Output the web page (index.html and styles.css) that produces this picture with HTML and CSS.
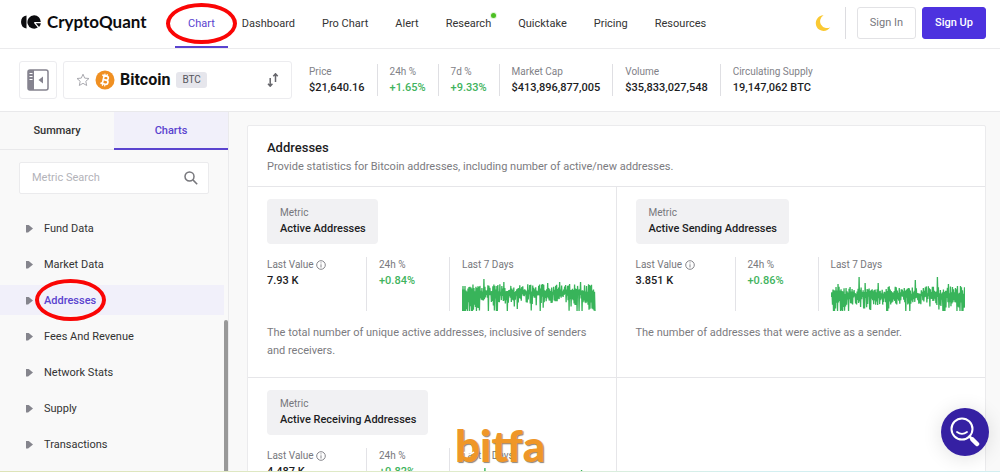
FILE: index.html
```html
<!DOCTYPE html>
<html lang="en">
<head>
<meta charset="utf-8">
<meta name="viewport" content="width=device-width, initial-scale=1">
<title>CryptoQuant - Bitcoin Addresses</title>
<link rel="stylesheet" href="styles.css">
</head>
<body>
<header class="topbar">
  <a class="brand" href="#">
    <svg class="brand-mark" viewBox="0 0 21 14" aria-hidden="true">
      <path d="M6.500 .5v13A6.600 6.600 0 0 1 6.500 .5z"/>
      <path d="M14.200 .3a6.700 6.700 0 1 0 3.600 12.300L14.200 8.200V7h6.600A6.700 6.700 0 0 0 14.200 .3z"/>
      <path d="M15.800 8.300h5a6 6 0 0 1-1.700 3.700z"/>
    </svg>
    <span class="brand-name">CryptoQuant</span>
  </a>
  <nav class="nav">
    <a class="nav-link active" href="#">Chart<span class="ring ring-nav"></span></a>
    <a class="nav-link" href="#">Dashboard</a>
    <a class="nav-link" href="#">Pro Chart</a>
    <a class="nav-link" href="#">Alert</a>
    <a class="nav-link" href="#">Research<span class="dot"></span></a>
    <a class="nav-link" href="#">Quicktake</a>
    <a class="nav-link" href="#">Pricing</a>
    <a class="nav-link" href="#">Resources</a>
  </nav>
  <div class="account">
    <button class="theme" type="button" aria-label="Dark mode">
      <svg viewBox="0 0 16 16"><path d="M8.600 .3A7.800 7.800 0 1 0 15.200 12.200 6.700 6.700 0 0 1 8.600 .3z"/></svg>
    </button>
    <div class="account-actions">
      <button class="btn" type="button">Sign In</button>
      <button class="btn btn-primary" type="button">Sign Up</button>
    </div>
  </div>
</header>

<section class="assetbar">
  <button class="panel-toggle" type="button" aria-label="Collapse sidebar">
    <svg viewBox="0 0 22 22">
      <rect x="1" y="1" width="20" height="20" rx="2" fill="#fff" stroke="#85838f" stroke-width="1.500"/>
      <path d="M2 1h5v20H2a1 1 0 0 1-1-1V2a1 1 0 0 1 1-1z" fill="#85838f"/>
      <path d="M2.500 4.500h3M2.500 7.500h3M2.500 10.500h3" stroke="#fff"/>
      <path d="M16 7.500v7L11.500 11z" fill="#85838f"/>
    </svg>
  </button>
  <button class="asset" type="button">
    <svg class="star" viewBox="0 0 14 14"><path d="M7 1.200l1.700 3.900 4.300.4-3.200 2.800.9 4.200L7 10.300l-3.700 2.200.9-4.200L1 5.500l4.300-.4z"/></svg>
    <svg class="coin" viewBox="0 0 20 20">
      <circle cx="10" cy="10" r="9.500" fill="#f09022"/>
      <g transform="rotate(13 10 10)" fill="none" stroke="#fff" stroke-width="1.700">
        <path d="M6.300 5.900h4.500a2 2 0 0 1 0 4H8.200M8.200 9.900h3.100a2.100 2.100 0 0 1 0 4.200h-5M8.200 5.900v8.200"/>
        <path d="M8.700 3.800v2M11 3.800v2M8.700 14.200v2M11 14.200v2" stroke-width="1.200"/>
      </g>
    </svg>
    <span class="asset-name">Bitcoin</span>
    <span class="ticker">BTC</span>
    <svg class="swap" viewBox="0 0 12 14"><path d="M3.200 5v8M1 10.800l2.200 2.400 2.200-2.400M8.500 9V1M6.300 3.200L8.500 .8l2.200 2.400"/></svg>
  </button>
  <dl class="quotes">
    <div class="quote"><dt>Price</dt><dd>$21,640.16</dd></div>
    <div class="quote"><dt>24h %</dt><dd class="up">+1.65%</dd></div>
    <div class="quote"><dt>7d %</dt><dd class="up">+9.33%</dd></div>
    <div class="quote"><dt>Market Cap</dt><dd>$413,896,877,005</dd></div>
    <div class="quote"><dt>Volume</dt><dd>$35,833,027,548</dd></div>
    <div class="quote"><dt>Circulating Supply</dt><dd>19,147,062 BTC</dd></div>
  </dl>
</section>

<div class="workspace">
  <aside class="sidebar">
    <div class="tabs">
      <button class="tab" type="button">Summary</button>
      <button class="tab selected" type="button">Charts</button>
    </div>
    <label class="search">
      <input type="text" placeholder="Metric Search" aria-label="Metric Search">
      <svg viewBox="0 0 14 14"><circle cx="5.500" cy="5.500" r="4.500"/><path d="M8.900 8.900l4.300 4.300"/></svg>
    </label>
    <nav class="tree">
      <a class="tree-item" href="#">Fund Data</a>
      <a class="tree-item" href="#">Market Data</a>
      <a class="tree-item current" href="#">Addresses<span class="ring ring-tree"></span></a>
      <a class="tree-item" href="#">Fees And Revenue</a>
      <a class="tree-item" href="#">Network Stats</a>
      <a class="tree-item" href="#">Supply</a>
      <a class="tree-item" href="#">Transactions</a>
    </nav>
    <span class="thumb"></span>
  </aside>

  <main class="content">
    <section class="card">
      <div class="card-head">
        <h1>Addresses</h1>
        <p>Provide statistics for Bitcoin addresses, including number of active/new addresses.</p>
      </div>
      <div class="metrics">
        <article class="metric">
          <a class="badge" href="#"><small>Metric</small><b>Active Addresses</b></a>
          <div class="stats">
            <div class="stat"><span class="label">Last Value <svg class="info" viewBox="0 0 10 10"><circle cx="5" cy="5" r="4.300"/><path d="M5 4.300v3.200M5 2.400v1"/></svg></span><strong>7.93 K</strong></div>
            <div class="stat"><span class="label">24h %</span><strong class="up">+0.84%</strong></div>
            <div class="stat"><span class="label">Last 7 Days</span><svg class="spark" data-series="active" viewBox="0 0 134 34" preserveAspectRatio="none"></svg></div>
          </div>
          <p class="about">The total number of unique active addresses, inclusive of senders and receivers.</p>
        </article>
        <article class="metric">
          <a class="badge" href="#"><small>Metric</small><b>Active Sending Addresses</b></a>
          <div class="stats">
            <div class="stat"><span class="label">Last Value <svg class="info" viewBox="0 0 10 10"><circle cx="5" cy="5" r="4.300"/><path d="M5 4.300v3.200M5 2.400v1"/></svg></span><strong>3.851 K</strong></div>
            <div class="stat"><span class="label">24h %</span><strong class="up">+0.86%</strong></div>
            <div class="stat"><span class="label">Last 7 Days</span><svg class="spark" data-series="sending" viewBox="0 0 134 34" preserveAspectRatio="none"></svg></div>
          </div>
          <p class="about">The number of addresses that were active as a sender.</p>
        </article>
        <article class="metric">
          <a class="badge" href="#"><small>Metric</small><b>Active Receiving Addresses</b></a>
          <div class="stats">
            <div class="stat"><span class="label">Last Value <svg class="info" viewBox="0 0 10 10"><circle cx="5" cy="5" r="4.300"/><path d="M5 4.300v3.200M5 2.400v1"/></svg></span><strong>4.487 K</strong></div>
            <div class="stat"><span class="label">24h %</span><strong class="up">+0.82%</strong></div>
            <div class="stat"><span class="label">Last 7 Days</span><svg class="spark" data-series="receiving" viewBox="0 0 134 34" preserveAspectRatio="none"></svg></div>
          </div>
        </article>
        <article class="metric"></article>
      </div>
    </section>
  </main>
</div>

<div class="watermark">bitfa<svg viewBox="0 0 12 5"><path d="M1 1q5 4.500 10 0"/></svg></div>
<button class="help" type="button" aria-label="Search help">
  <svg viewBox="0 0 30 30"><circle cx="12" cy="12" r="10.500" stroke-width="2"/><path d="M7 15q5 3.600 10 0" stroke-width="1.800"/><path d="M19.500 19.500l3 3" stroke-width="2.500"/><path d="M22.500 22.500l4.500 4.500" stroke-width="4.500"/></svg>
</button>
<div class="baseline"></div>
<script src="sparks.js"></script>
</body>
</html>
```

FILE: styles.css
```css
* { box-sizing: border-box; }
body {
  margin: 0;
  height: 100vh;
  display: flex;
  flex-direction: column;
  overflow: hidden;
  position: relative;
  background: #fff;
  color: #333;
  font: 11px/16px Roboto, "Liberation Sans", sans-serif;
}
a { color: inherit; text-decoration: none; }
button { font: inherit; color: inherit; background: none; border: 0; padding: 0; }
h1, p, dl, dd { margin: 0; }

.topbar {
  flex: none;
  display: flex;
  height: 49px;
  padding: 0 14px 0 20px;
  border-bottom: 1px solid #ebebed;
}
.brand { display: flex; align-items: center; gap: 6px; width: 155px; height: 44px; }
.brand-mark { width: 21px; height: 14px; fill: #0c0c0f; }
.brand-name { font: 700 17px/24px Lato, sans-serif; color: #0c0c0f; }
.nav { display: flex; gap: 1px; }
.nav-link { position: relative; padding: 0 13px; line-height: 47px; white-space: nowrap; }
.nav-link.active { color: #5a43cf; border-bottom: 2px solid #5a43cf; }
.dot {
  position: absolute; top: 13px; right: 8px;
  width: 5px; height: 5px; border-radius: 50%;
  background: #4cbf22; box-shadow: 0 0 0 1px #e0f5d8;
}
.ring { position: absolute; border: 4px solid #fa0505; border-radius: 50%; z-index: 2; pointer-events: none; }
.ring-nav { inset: 3px -9px 2px -9px; }
.account { display: flex; align-items: center; gap: 14px; margin-left: auto; height: 46px; }
.theme { width: 16px; height: 16px; }
.theme svg { display: block; fill: #fac933; }
.account-actions { display: flex; gap: 6px; padding-left: 11px; border-left: 1px solid #dcdce0; }
.btn { height: 32px; padding: 0 12px; border: 1px solid #e2e2e5; border-radius: 3px; color: #77777d; }
.btn-primary { background: #4d32df; border-color: #4d32df; color: #fff; font-weight: 500; }

.assetbar {
  flex: none;
  display: flex;
  align-items: center;
  height: 63px;
  padding: 0 14px 0 19px;
  border-bottom: 1px solid #e9e9eb;
}
.panel-toggle, .asset { height: 38px; border: 1px solid #ececef; border-radius: 3px; }
.panel-toggle { display: grid; place-items: center; width: 38px; margin-right: 6px; }
.panel-toggle svg { width: 22px; height: 22px; }
.asset { display: flex; align-items: center; width: 229px; padding: 0 12px; margin-right: 17px; }
.star { width: 14px; height: 14px; margin-right: 5px; fill: none; stroke: #aaaab0; }
.coin { width: 20px; height: 20px; margin-right: 5px; }
.asset-name { font-size: 16px; font-weight: 700; color: #111; }
.ticker { margin-left: 6px; padding: 0 6px; border-radius: 3px; background: #e6e6ec; color: #55555c; font-size: 10px; }
.swap { width: 12px; height: 14px; margin-left: auto; fill: none; stroke: #66666c; stroke-width: 1.500; }
.quotes { display: flex; }
.quote { padding-right: 12px; margin-right: 12px; border-right: 1px solid #dfdfe3; white-space: nowrap; }
.quote:last-child { border: 0; margin: 0; padding: 0; }
.quote dt { font-size: 10px; color: #818187; }
.quote dd { font-weight: 500; color: #1d1d1f; }
.quote .up, .stat .up { color: #41b35d; }

.workspace { flex: 1; min-height: 0; display: flex; }
.sidebar { position: relative; flex: none; width: 229px; background: #f9f9f9; border-right: 1px solid #eaeaec; overflow: hidden; }
.tabs { display: flex; height: 38px; }
.tab { flex: 1; box-shadow: inset 0 -1px #e9e9eb; font-weight: 500; }
.tab.selected { background: #f1f0fa; color: #5a43cf; box-shadow: inset 0 -2px #5a43cf; }
.search {
  display: flex; align-items: center;
  height: 32px; margin: 12px 19px 19px; padding: 0 10px 0 12px;
  background: #fff; border: 1px solid #ebebed; border-radius: 2px;
}
.search input { flex: 1; min-width: 0; padding: 0; border: 0; outline: 0; background: none; font: inherit; }
.search input::placeholder { color: #b3b3b9; }
.search svg { width: 14px; height: 14px; fill: none; stroke: #77777c; stroke-width: 1.500; }
.tree { display: flex; flex-direction: column; gap: 6px; margin-right: 4px; }
.tree-item { position: relative; display: flex; align-items: center; gap: 11px; height: 30px; padding: 1px 0 0 26px; }
.tree-item::before {
  content: ""; width: 7px; height: 8px; background: #85858d;
  clip-path: polygon(0 0, 30% 0, 100% 50%, 30% 100%, 0 100%);
}
.tree-item.current { background: #f1f0fa; color: #5a43cf; font-weight: 500; }
.ring-tree { left: 35px; top: -6px; width: 71px; height: 42px; }
.thumb { position: absolute; right: 0; top: 208px; bottom: 0; width: 4px; border-radius: 2px 2px 0 0; background: #999; }

.content { flex: 1; min-width: 0; padding: 13px 14px 0 18px; background: #f9f9f9; }
.card { background: #fff; border: 1px solid #ebebed; border-radius: 2px; }
.card-head { padding: 13px 19px 9px; border-bottom: 1px solid #e6e6e9; }
.card-head h1 { font-size: 13px; line-height: 18px; font-weight: 500; color: #1d1d1f; }
.card-head p { line-height: 20px; color: #7b7b80; }
.metrics { display: grid; grid-template-columns: 1fr 1fr; }
.metric { min-height: 191px; padding: 12px 20px 17px 19px; border-bottom: 1px solid #e6e6e9; }
.metric:nth-child(odd) { border-right: 1px solid #e6e6e9; }
.badge { display: inline-flex; flex-direction: column; padding: 6px 12px 7px 13px; border-radius: 4px; background: #f1f1f3; vertical-align: top; }
.badge small { font-size: 10px; color: #77777c; }
.badge b { font-weight: 500; color: #1d1d1f; }
.stats { display: grid; grid-template-columns: 99px 83px 1fr; height: 54px; margin: 13px 0; }
.stat { display: flex; flex-direction: column; min-width: 0; }
.stat + .stat { padding-left: 12px; border-left: 1px solid #e3e3e7; }
.label { font-size: 10px; color: #77777c; white-space: nowrap; }
.stat strong { font-weight: 500; color: #1d1d1f; }
.info { width: 10px; height: 10px; vertical-align: -2px; fill: none; stroke: #85858b; stroke-width: 1; }
.spark { width: 100%; height: 34px; margin-top: 4px; }
.about { line-height: 18px; color: #7b7b80; }

.watermark {
  position: absolute; left: 455px; bottom: 2px;
  font: 900 44px/50px Lato, sans-serif; color: #ef9728;
  text-shadow: 1px 1px 1px #8c857c;
}
.watermark svg { position: absolute; left: 8px; bottom: 14px; width: 12px; height: 5px; fill: none; stroke: #fff; stroke-width: 1.500; }
.help {
  position: absolute; right: 11px; bottom: 16px;
  display: grid; place-items: center;
  width: 48px; height: 48px; border-radius: 50%;
  background: #3520a3; box-shadow: 0 2px 20px #0000001f;
}
.help svg { width: 30px; height: 30px; fill: none; stroke: #fff; stroke-linecap: round; }
.baseline { position: absolute; inset: auto 0 0; height: 1px; background: linear-gradient(90deg, #dde3b8, #dfeccd 50%, #d3eff1 75%); }
```

FILE: sparks.js
```js
// Each series lists spikes as [x, top] and dense dips as [from, to, probability].
const series = {
  active: {
    seed: 7, base: 13,
    spikes: [[22, 2], [42, 5], [86, 6], [98, 5], [119, 5], [3, 9]],
    dips: [[0, 18, .9], [26, 40, .5], [48, 56, .3], [64, 82, .3], [96, 106, .4], [107, 121, .7], [124, 134, .85]]
  },
  sending: {
    seed: 23, base: 15,
    spikes: [[28, 0], [34, 6], [84, 3], [106, 0], [117, 7], [7, 7], [47, 6]],
    dips: [[0, 18, .9], [27, 40, .5], [50, 58, .6], [64, 82, .25], [90, 99, .35], [107, 121, .75], [124, 134, .95]]
  },
  receiving: {
    seed: 41, base: 14,
    spikes: [[23, 0], [43, 3], [87, 6], [120, 2]],
    dips: [[0, 18, .8], [26, 40, .4], [107, 134, .7]]
  }
};

for (const svg of document.querySelectorAll(".spark")) {
  const { seed, base, spikes, dips } = series[svg.dataset.series];
  let state = seed;
  const random = () => (state = (state * 16807) % 2147483647) / 2147483647;
  for (let i = 0; i < 10; i++) random();
  let line = "";
  for (let x = 0; x < 134; x++) {
    const dip = dips.find(d => x >= d[0] && x < d[1]);
    const spike = spikes.find(s => s[0] === x);
    const top = spike ? spike[1] : base - 6 + random() * 8;
    const deep = random() < (dip ? dip[2] : 0.05);
    const bottom = deep ? 25 + random() * 14 : base + 4 + random() * 9;
    line += `${x ? "L" : "M"}${x} ${top.toFixed(1)}L${x + 0.5} ${Math.min(34, bottom).toFixed(1)}`;
  }
  svg.innerHTML = `<path d="${line}" fill="none" stroke="#38b45a" stroke-width="1.3" stroke-linejoin="bevel"/>`;
}
```
